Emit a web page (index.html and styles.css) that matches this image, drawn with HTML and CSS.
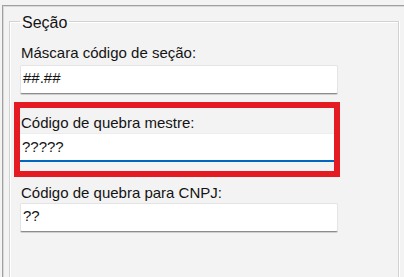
FILE: index.html
```html
<!DOCTYPE html>
<html lang="pt-BR">
<head>
<meta charset="utf-8">
<title>Seção</title>
<link rel="stylesheet" href="styles.css">
</head>
<body>
<div class="panel">
  <fieldset class="group">
    <legend class="group-title">Seção</legend>
    <div class="field field-first">
      <label class="field-label">Máscara código de seção:</label>
      <div class="textbox">##.##</div>
    </div>
    <div class="highlight">
      <div class="field">
        <label class="field-label">Código de quebra mestre:</label>
        <div class="textbox textbox-focused">?????</div>
      </div>
    </div>
    <div class="field field-last">
      <label class="field-label">Código de quebra para CNPJ:</label>
      <div class="textbox">??</div>
    </div>
  </fieldset>
</div>
</body>
</html>
```

FILE: styles.css
```css
html, body {
  margin: 0;
  padding: 0;
  background: #f3f3f3;
  overflow: hidden;
}

body {
  width: 404px;
  height: 277px;
  font-family: "Liberation Sans", Arial, sans-serif;
  color: #141414;
}

.panel {
  box-sizing: border-box;
  display: flex;
  flex-direction: column;
  margin: 5px 0 0 2px;
  height: 272px;
  border-top: 1px solid #a0a0a0;
  border-left: 1px solid #a0a0a0;
  box-shadow: inset 1px 1px 0 #d9d9d9;
  padding: 5px 0 0 6px;
}

.group {
  box-sizing: border-box;
  flex: 1;
  width: 390px;
  margin: 0;
  padding: 12px 0 0 10px;
  border: 1px solid #d2d2d2;
  border-bottom: none;
  box-shadow: inset 1px 1px 0 #ffffff, 1px 0 0 #ffffff;
  min-width: 0;
}

.group-title {
  padding: 2px 2px 0 2px;
  margin: 0;
  font-size: 16px;
  line-height: 19px;
  color: #141414;
}

.field {
  display: flex;
  flex-direction: column;
}

.field-label {
  display: block;
  font-size: 15px;
  line-height: 18px;
  padding-left: 1px;
  margin-bottom: 3px;
}

.highlight .field-label,
.field-last .field-label {
  margin-bottom: 1px;
}

.textbox {
  box-sizing: border-box;
  width: 318px;
  height: 29px;
  padding: 3px 0 0 2px;
  font-size: 15px;
  line-height: 18px;
  background: #ffffff;
  border: 1px solid #e4e4e4;
  border-bottom: 1px solid #8c8c8c;
  border-radius: 2px;
  box-shadow: 0 1px 0 #cfcfcf;
}

.highlight {
  box-sizing: border-box;
  width: 326px;
  margin: 8px 0 0 -6px;
  border: 6px solid #e51b23;
  padding: 6px 0 9px 0;
}

.textbox-focused {
  width: 314px;
  padding-top: 4px;
  border: none;
  border-top: 1px solid #ededed;
  border-bottom: 2px solid #0067c0;
  border-radius: 0;
  box-shadow: none;
}

.field-last {
  margin-top: 7px;
}
```
